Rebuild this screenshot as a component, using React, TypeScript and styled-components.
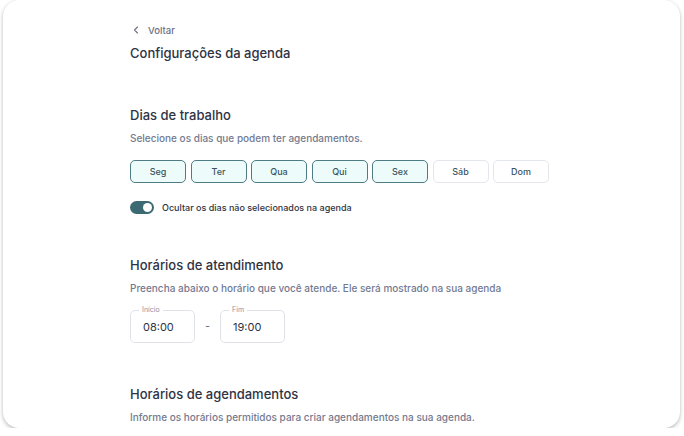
import React from 'react'
import styled, { createGlobalStyle } from 'styled-components'

const GlobalStyle = createGlobalStyle`
  body {
    margin: 0;
    background: #ffffff;
    font-family: Inter, "Noto Sans", sans-serif;
    color: #2e3344;
  }
`

const Card = styled.div`
  margin: 0 4px 0 3px;
  height: 428px;
  background: #fff;
  border-radius: 16px;
  box-shadow: 0 2px 4px rgba(0, 0, 0, 0.24), 0 0 2px rgba(0, 0, 0, 0.08);
  overflow: hidden;
  box-sizing: border-box;
  padding: 23px 0 0 127px;
`

const Back = styled.a`
  display: flex;
  align-items: center;
  gap: 9px;
  font-size: 9.5px;
  font-weight: 500;
  color: #6b7083;
  margin-left: 3px;
  height: 14px;
`

const PageTitle = styled.h1`
  margin: 7px 0 0;
  font-size: 13px;
  font-weight: 500;
  line-height: 18px;
  color: #2e3344;
`

const Section = styled.section<{ top: number }>`
  margin-top: ${({ top }) => top}px;
`

const SectionTitle = styled.h2`
  margin: 0;
  font-size: 13px;
  font-weight: 500;
  line-height: 18px;
  color: #2e3344;
`

const Hint = styled.p`
  margin: 7px 0 0;
  font-size: 10px;
  font-weight: 500;
  line-height: 14px;
  color: #747a90;
`

const DayRow = styled.div`
  display: flex;
  gap: 4.5px;
  margin-top: 15px;
`

const Day = styled.button<{ active: boolean }>`
  width: 56px;
  height: 23px;
  box-sizing: border-box;
  border-radius: 5px;
  border: 1px solid ${({ active }) => (active ? '#4d7c84' : '#e3e6ea')};
  background: ${({ active }) => (active ? '#edfcfb' : '#fff')};
  font-family: inherit;
  font-size: 9px;
  font-weight: 500;
  color: #3a5560;
  padding: 0;
`

const ToggleRow = styled.label`
  display: flex;
  align-items: center;
  gap: 8px;
  margin-top: 18px;
  font-size: 9px;
  font-weight: 500;
  color: #2e3344;
`

const Switch = styled.span<{ on: boolean }>`
  position: relative;
  width: 24px;
  height: 13px;
  border-radius: 7px;
  background: ${({ on }) => (on ? '#3c6a73' : '#c9ced6')};
  &::after {
    content: '';
    position: absolute;
    top: 2px;
    left: ${({ on }) => (on ? '13px' : '2px')};
    width: 9px;
    height: 9px;
    border-radius: 50%;
    background: #fff;
  }
`

const TimeRow = styled.div`
  display: flex;
  align-items: center;
  gap: 10px;
  margin-top: 11px;
`

const TimeBox = styled.fieldset`
  margin: 0;
  width: 65px;
  height: 37px;
  box-sizing: border-box;
  border: 1px solid #dfe2e7;
  border-radius: 5px;
  padding: 0 0 0 12px;
  display: flex;
  align-items: center;
  legend {
    margin-left: -4px;
    padding: 0 3px;
    font-size: 7px;
    color: #8f94a3;
    line-height: 8px;
  }
  span {
    font-size: 11px;
    color: #2e3344;
    margin-top: -3px;
  }
`

const Dash = styled.span`
  font-size: 11px;
  color: #6b7083;
  margin-top: 3px;
`

const days = [
  { label: 'Seg', active: true },
  { label: 'Ter', active: true },
  { label: 'Qua', active: true },
  { label: 'Qui', active: true },
  { label: 'Sex', active: true },
  { label: 'Sáb', active: false },
  { label: 'Dom', active: false },
]

const Chevron = () => (
  <svg width="6" height="8" viewBox="0 0 6 8" fill="none">
    <path d="M4.5 1 L1.5 4 L4.5 7" stroke="#6b7083" strokeWidth="1.1" strokeLinecap="round" strokeLinejoin="round" />
  </svg>
)

export default function App() {
  return (
    <>
      <GlobalStyle />
      <Card>
        <Back><Chevron /> Voltar</Back>
        <PageTitle>Configurações da agenda</PageTitle>

        <Section top={44}>
          <SectionTitle>Dias de trabalho</SectionTitle>
          <Hint>Selecione os dias que podem ter agendamentos.</Hint>
          <DayRow>
            {days.map(d => <Day key={d.label} active={d.active}>{d.label}</Day>)}
          </DayRow>
          <ToggleRow><Switch on /> Ocultar os dias não selecionados na agenda</ToggleRow>
        </Section>

        <Section top={42}>
          <SectionTitle>Horários de atendimento</SectionTitle>
          <Hint>Preencha abaixo o horário que você atende. Ele será mostrado na sua agenda</Hint>
          <TimeRow>
            <TimeBox><legend>Início</legend><span>08:00</span></TimeBox>
            <Dash>-</Dash>
            <TimeBox><legend>Fim</legend><span>19:00</span></TimeBox>
          </TimeRow>
        </Section>

        <Section top={42}>
          <SectionTitle>Horários de agendamentos</SectionTitle>
          <Hint>Informe os horários permitidos para criar agendamentos na sua agenda.</Hint>
        </Section>
      </Card>
    </>
  )
}
